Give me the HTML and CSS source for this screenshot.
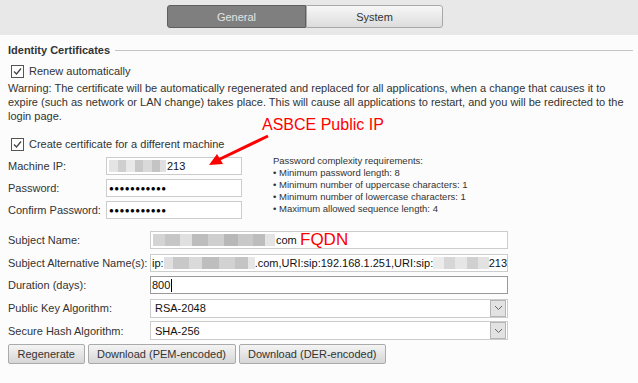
FILE: index.html
```html
<!DOCTYPE html>
<html lang="en">
<head>
    <meta charset="UTF-8">
    <title>Identity Certificates</title>
    <link rel="stylesheet" href="styles.css">
</head>
<body>
    <div class="tab-bar">
        <div class="tab tab-active">General</div>
        <div class="tab">System</div>
    </div>

    <div class="content">
        <div class="section-title">
            <span>Identity Certificates</span>
            <div class="section-line"></div>
        </div>

        <label class="check-row">
            <svg class="check-box" width="13" height="13" viewBox="0 0 13 13">
                <rect x="0.5" y="0.5" width="12" height="12" fill="#fff" stroke="#555"/>
                <path d="M3 6.5 L5.5 9 L10 3.5" fill="none" stroke="#444" stroke-width="1.3"/>
            </svg>
            Renew automatically
        </label>

        <p class="warning">Warning: The certificate will be automatically regenerated and replaced for all applications, when a change that causes it to expire (such as network or LAN change) takes place. This will cause all applications to restart, and you will be redirected to the <span class="nowrap">login page.</span></p>

        <label class="check-row check-row-2">
            <svg class="check-box" width="13" height="13" viewBox="0 0 13 13">
                <rect x="0.5" y="0.5" width="12" height="12" fill="#fff" stroke="#555"/>
                <path d="M3 6.5 L5.5 9 L10 3.5" fill="none" stroke="#444" stroke-width="1.3"/>
            </svg>
            Create certificate for a different machine
        </label>

        <div class="machine">
            <div class="machine-fields">
                <div class="field-row">
                    <span class="label label-short">Machine IP:</span>
                    <div class="input input-short"><span class="blur blur-ip"></span>213</div>
                </div>
                <div class="field-row">
                    <span class="label label-short">Password:</span>
                    <div class="input input-short dots">&#9679;&#9679;&#9679;&#9679;&#9679;&#9679;&#9679;&#9679;&#9679;&#9679;&#9679;</div>
                </div>
                <div class="field-row">
                    <span class="label label-short">Confirm Password:</span>
                    <div class="input input-short dots">&#9679;&#9679;&#9679;&#9679;&#9679;&#9679;&#9679;&#9679;&#9679;&#9679;&#9679;</div>
                </div>
            </div>
            <div class="complexity">
                Password complexity requirements:<br>
                &bull; Minimum password length: 8<br>
                &bull; Minimum number of uppercase characters: 1<br>
                &bull; Minimum number of lowercase characters: 1<br>
                &bull; Maximum allowed sequence length: 4
            </div>
        </div>

        <div class="subject">
            <div class="field-row">
                <span class="label label-long">Subject Name:</span>
                <div class="input input-long"><span class="blur blur-name"></span>com</div>
            </div>
            <div class="field-row">
                <span class="label label-long">Subject Alternative Name(s):</span>
                <div class="input input-long input-tight">ip:<span class="blur blur-san"></span>.com,URI:sip:192.168.1.251,URI:sip:<span class="blur blur-san2"></span>213</div>
            </div>
            <div class="field-row">
                <span class="label label-long">Duration (days):</span>
                <div class="input input-long input-tight input-focus">800<span class="caret"></span></div>
            </div>
            <div class="field-row">
                <span class="label label-long">Public Key Algorithm:</span>
                <div class="select">
                    <span class="select-value">RSA-2048</span>
                    <span class="select-arrow">
                        <svg width="9" height="6" viewBox="0 0 9 6"><path d="M1 1 L4.5 4.5 L8 1" fill="none" stroke="#666" stroke-width="1"/></svg>
                    </span>
                </div>
            </div>
            <div class="field-row">
                <span class="label label-long">Secure Hash Algorithm:</span>
                <div class="select">
                    <span class="select-value">SHA-256</span>
                    <span class="select-arrow">
                        <svg width="9" height="6" viewBox="0 0 9 6"><path d="M1 1 L4.5 4.5 L8 1" fill="none" stroke="#666" stroke-width="1"/></svg>
                    </span>
                </div>
            </div>
        </div>

        <div class="buttons">
            <button class="btn">Regenerate</button>
            <button class="btn">Download (PEM-encoded)</button>
            <button class="btn">Download (DER-encoded)</button>
        </div>
    </div>

    <!-- annotations drawn over the screenshot -->
    <div class="note note-ip">ASBCE Public IP</div>
    <div class="note note-fqdn">FQDN</div>
    <svg class="note-arrow" width="70" height="40" viewBox="0 0 70 40">
        <line x1="62" y1="4" x2="12" y2="28" stroke="#f00" stroke-width="3"/>
        <polygon points="3,33 11,22 17,32" fill="#f00"/>
    </svg>
</body>
</html>
```

FILE: styles.css
```css
* {
    margin: 0;
    padding: 0;
    box-sizing: border-box;
}

body {
    background-color: #fcfcfc;
    font-family: 'Liberation Sans', Arial, sans-serif;
    font-size: 11px;
    color: #333;
    position: relative;
    width: 638px;
    height: 383px;
    overflow: hidden;
}

.tab-bar {
    height: 35px;
    background-color: #e8e8e8;
    display: flex;
    padding: 5px 0 0 167px;
}

.tab {
    width: 137px;
    height: 23px;
    display: flex;
    align-items: center;
    justify-content: center;
    font-size: 11px;
    color: #333;
    border: 1px solid #a8a8a8;
    border-radius: 0 3px 3px 0;
    background: linear-gradient(#f7f7f7, #dcdcdc);
}

.tab-active {
    width: 139px;
    color: #e4e4e4;
    background: #7f7f7f;
    border-color: #5f5f5f;
    border-radius: 3px 0 0 3px;
}

.content {
    padding: 0 5px 0 8px;
}

.section-title {
    display: flex;
    align-items: center;
    gap: 5px;
    margin-top: 8px;
    height: 14px;
    font-weight: bold;
    color: #333;
}

.section-line {
    flex: 1;
    height: 1px;
    background-color: #c4c4c4;
}

.check-row {
    display: flex;
    align-items: center;
    gap: 5px;
    height: 14px;
    margin-top: 7px;
    padding-left: 3px;
}

.check-row-2 {
    margin-top: 14px;
}

.warning {
    line-height: 14px;
    margin-top: 3px;
}

.nowrap {
    white-space: nowrap;
}

.machine {
    display: flex;
    margin-top: 6px;
}

.field-row {
    display: flex;
    align-items: center;
    height: 18px;
    margin-bottom: 4px;
}

.label {
    flex-shrink: 0;
}

.label-short {
    width: 98px;
}

.label-long {
    width: 142px;
}

.input {
    height: 18px;
    border: 1px solid #ccc;
    background-color: #fff;
    color: #111;
    font-size: 11px;
    display: flex;
    align-items: center;
    padding-left: 2px;
    white-space: nowrap;
    overflow: hidden;
}

.input-short {
    width: 136px;
}

.input-long {
    width: 358px;
}

.input-tight {
    padding-left: 1px;
}

.input-focus {
    border-color: #999;
}

.dots {
    font-size: 8px;
    letter-spacing: 0.4px;
    color: #000;
}

.caret {
    display: inline-block;
    width: 1px;
    height: 13px;
    background-color: #000;
    margin-left: 1px;
}

.blur {
    display: inline-block;
    height: 12px;
    background: linear-gradient(90deg, #e4e4e4 0 15%, #cfcfcf 15% 30%, #e8e8e8 30% 45%, #c8c8c8 45% 60%, #d9d9d9 60% 75%, #c4c4c4 75% 90%, #e0e0e0 90%);
}

.blur-ip {
    width: 57px;
    margin-right: 1px;
}

.blur-name {
    width: 122px;
    margin-right: 1px;
    background: linear-gradient(90deg, #d4d4d4 0 10%, #c6c6c6 10% 22%, #e0e0e0 22% 32%, #bdbdbd 32% 45%, #cfcfcf 45% 58%, #b8b8b8 58% 70%, #c9c9c9 70% 82%, #bdbdbd 82% 92%, #e4e4e4 92%);
}

.blur-san {
    width: 92px;
    background: linear-gradient(90deg, #e0e0e0 0 10%, #c8c8c8 10% 28%, #dadada 28% 42%, #bebebe 42% 60%, #d2d2d2 60% 78%, #c4c4c4 78% 92%, #e6e6e6 92%);
}

.blur-san2 {
    width: 56px;
    background: linear-gradient(90deg, #ececec 0 20%, #d6d6d6 20% 40%, #e6e6e6 40% 60%, #d0d0d0 60% 80%, #e2e2e2 80%);
}

.complexity {
    margin-left: 31px;
    margin-top: -2px;
    font-size: 9.5px;
    line-height: 12px;
    color: #333;
}

.subject {
    margin-top: 8px;
}

.subject .field-row {
    margin-bottom: 4.7px;
}

.select {
    width: 358px;
    height: 19px;
    border: 1px solid #ccc;
    background-color: #fff;
    display: flex;
    align-items: center;
    justify-content: space-between;
    padding: 0 1px 0 4px;
    color: #111;
}

.select-arrow {
    width: 16px;
    height: 17px;
    background-color: #e2e2e2;
    border: 1px solid #b5b5b5;
    display: flex;
    align-items: center;
    justify-content: center;
}

.buttons {
    display: flex;
    gap: 3px;
    margin-top: 3px;
}

.btn {
    height: 20px;
    padding: 0 8.5px;
    font-family: 'Liberation Sans', Arial, sans-serif;
    font-size: 11px;
    color: #333;
    border: 1px solid #aaa;
    border-radius: 2px;
    background: linear-gradient(#f4f4f4, #d6d6d6);
}

.note {
    position: absolute;
    color: #f00;
    font-family: 'Liberation Sans', Arial, sans-serif;
    line-height: 1;
}

.note-ip {
    left: 262px;
    top: 117px;
    font-size: 16px;
}

.note-fqdn {
    left: 300px;
    top: 231px;
    font-size: 17px;
}

.note-arrow {
    position: absolute;
    left: 206px;
    top: 132px;
}
```
